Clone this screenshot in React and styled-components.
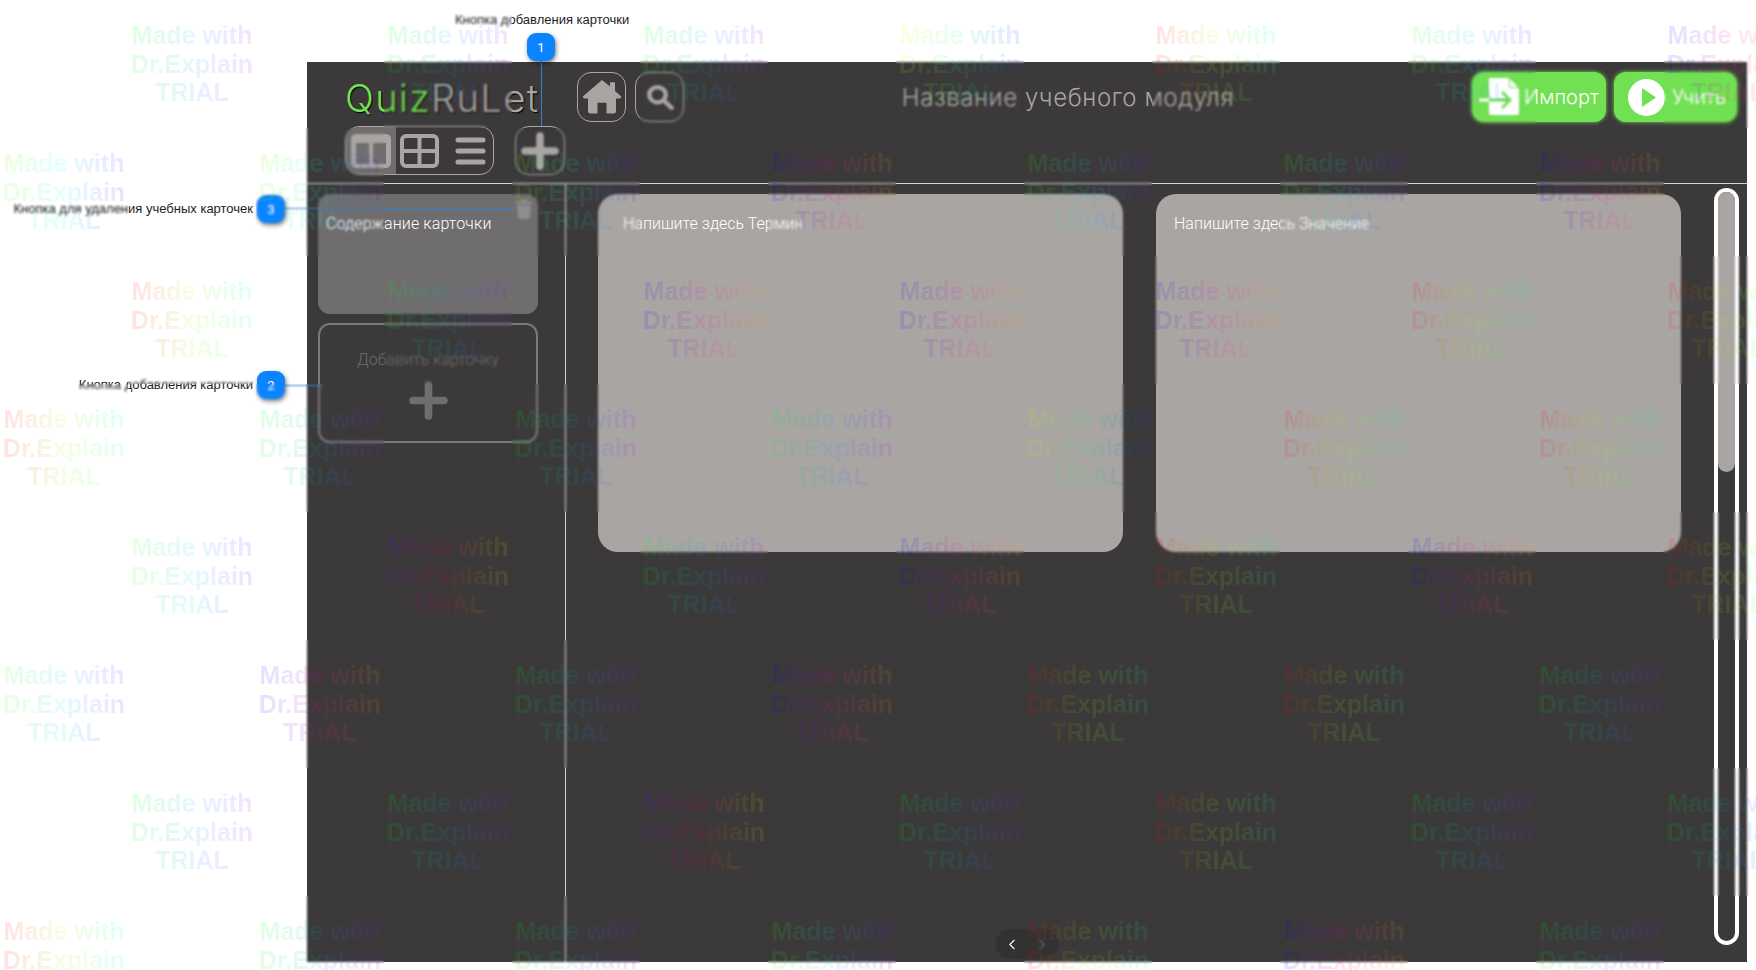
import React from "react";
import styled, { createGlobalStyle } from "styled-components";
import { ChevronLeft, ChevronRight } from "lucide-react";

const GlobalStyle = createGlobalStyle`
  html, body {
    margin: 0;
    height: 970px;
    overflow: hidden;
    background: #fff;
    font-family: Roboto, "Liberation Sans", sans-serif;
  }
`;

const GREY = "#a9a5a3";
const DIM = "#6f6d6d";
const GREEN = "#72e053";
const BLUE = "#0a84ff";

const Page = styled.div`
  position: relative;
  width: 1756px;
  height: 970px;
  padding: 62px 0 0 307px;
  box-sizing: border-box;
  overflow: hidden;
`;

const Panel = styled.div`
  position: relative;
  width: 1440px;
  height: 900px;
  background: #3b3939;
  display: flex;
  flex-direction: column;
`;

const Header = styled.header`
  height: 122px;
  box-sizing: border-box;
  padding: 10px 10px 0 38px;
  display: flex;
  align-items: flex-start;
  border-bottom: 1px solid #d5d3d2;
`;

const HeaderLeft = styled.div`
  width: 339px;
  display: flex;
  flex-direction: column;
  gap: 4px;
`;

const Row = styled.div`
  display: flex;
  align-items: center;
`;

const Logo = styled.div`
  width: 232px;
  height: 50px;
  font-family: Inter, sans-serif;
  font-size: 38px;
  font-weight: 300;
  letter-spacing: 1.4px;
  line-height: 52px;
  color: ${GREY};
  box-sizing: border-box;
  text-shadow: 1px 1px 1px #000;
  white-space: nowrap;

  span {
    color: ${GREEN};
  }
`;

const IconButton = styled.button`
  width: ${(p) => p.$w || 49}px;
  height: ${(p) => p.$h || 50}px;
  margin-left: ${(p) => p.$ml || 0}px;
  padding: 0;
  display: flex;
  align-items: center;
  justify-content: center;
  background: transparent;
  border: 1px solid ${GREY};
  border-radius: 14px;
  color: ${GREY};
`;

const Tabs = styled.div`
  width: 149px;
  height: 49px;
  box-sizing: border-box;
  display: flex;
  border: 1px solid ${GREY};
  border-radius: 14px;
  overflow: hidden;
`;

const Tab = styled.div`
  flex: 0 0 ${(p) => p.$w}px;
  box-sizing: border-box;
  padding-left: ${(p) => p.$pl || 0}px;
  display: flex;
  align-items: center;
  justify-content: center;
  background: ${(p) => (p.$active ? DIM : "transparent")};
`;

const Title = styled.h1`
  flex: 1;
  margin: 0;
  height: 52px;
  line-height: 52px;
  padding-right: 20px;
  text-align: center;
  font-family: Inter, sans-serif;
  font-size: 24px;
  font-weight: 300;
  letter-spacing: 0.6px;
  color: ${GREY};
`;

const Actions = styled.div`
  display: flex;
  gap: 8px;
`;

const GreenButton = styled.button`
  width: ${(p) => p.$w}px;
  height: 50px;
  padding: 0 0 0 ${(p) => p.$pl}px;
  display: flex;
  align-items: center;
  gap: ${(p) => p.$gap}px;
  background: ${GREEN};
  border: 0;
  border-radius: 12px;
  box-shadow: 0 0 4px ${GREEN};
  color: #fff;
  font-family: Inter, sans-serif;
  font-weight: 300;
  font-size: 20px;
`;

const Body = styled.div`
  flex: 1;
  display: flex;
  min-height: 0;
`;

const Sidebar = styled.aside`
  width: 259px;
  box-sizing: border-box;
  padding: 10px 0 0 11px;
  border-right: 1px solid #d5d3d2;
  display: flex;
  flex-direction: column;
  gap: 9px;
`;

const MiniCard = styled.div`
  position: relative;
  width: 220px;
  height: 120px;
  box-sizing: border-box;
  padding: 20px 8px;
  background: ${DIM};
  border-radius: 12px;
  color: #fff;
  font-size: 16px;
  font-weight: 300;
  letter-spacing: 0.12px;
  line-height: 20px;
`;

const TrashIcon = styled.svg`
  position: absolute;
  top: 6px;
  right: 6px;
`;

const AddCard = styled.div`
  width: 220px;
  height: 120px;
  box-sizing: border-box;
  padding-top: 25px;
  border: 2px solid #7b7979;
  border-radius: 12px;
  display: flex;
  flex-direction: column;
  align-items: center;
  gap: 11px;
  color: ${DIM};
  font-size: 16px;
  font-weight: 300;
  line-height: 20px;
`;

const Content = styled.main`
  flex: 1;
  display: flex;
  align-items: flex-start;
  padding: 4px 8px 0 32px;
`;

const BigCard = styled.div`
  width: ${(p) => p.$w}px;
  height: 358px;
  margin: 6px 33px 0 0;
  box-sizing: border-box;
  padding: 20px ${(p) => p.$pl}px;
  background: ${GREY};
  border-radius: 20px;
  color: #fff;
  font-size: 16px;
  font-weight: 300;
  line-height: 20px;
`;

const ScrollTrack = styled.div`
  width: 25px;
  height: 757px;
  box-sizing: border-box;
  border: 4px solid #fff;
  border-radius: 13px;
`;

const ScrollThumb = styled.div`
  height: 280px;
  background: ${GREY};
  border-radius: 9px;
`;

const Pager = styled.div`
  position: absolute;
  left: 50%;
  bottom: 3px;
  transform: translateX(-50%);
  width: 63px;
  height: 30px;
  display: flex;
  align-items: center;
  justify-content: space-around;
  padding: 0 2px;
  box-sizing: border-box;
  background: #333232;
  border-radius: 15px;
  color: #fff;
`;

const Badge = styled.div`
  position: absolute;
  left: ${(p) => p.$x}px;
  top: ${(p) => p.$y}px;
  width: 28px;
  height: 28px;
  display: flex;
  align-items: center;
  justify-content: center;
  background: ${BLUE};
  border-radius: 9px;
  box-shadow: 1px 2px 4px rgba(0, 0, 0, 0.55);
  color: #fff;
  font-size: 13px;
`;

const Label = styled.div`
  position: absolute;
  top: ${(p) => p.$y}px;
  white-space: nowrap;
  color: #1e1e1e;
  font-family: "Liberation Sans", sans-serif;
  font-size: 13px;
  line-height: 16px;
  ${(p) => (p.$right != null ? `right: ${1756 - p.$right}px;` : `left: ${p.$left}px;`)}
`;

const Wire = styled.div`
  position: absolute;
  left: ${(p) => p.$x}px;
  top: ${(p) => p.$y}px;
  width: ${(p) => p.$w}px;
  height: ${(p) => p.$h}px;
  background: #2f83d6;
`;

const Watermark = styled.div`
  position: absolute;
  inset: 0;
  pointer-events: none;
`;

const WatermarkRow = styled.div`
  display: flex;
  gap: 128px;
  height: 128px;
  padding-left: ${(p) => (p.$odd ? 0 : 128)}px;
`;

const WatermarkTile = styled.div`
  flex: 0 0 128px;
  height: 128px;
  box-sizing: border-box;
  display: flex;
  flex-direction: column;
  align-items: center;
  justify-content: center;
  backdrop-filter: blur(1px);
  font-family: "Liberation Sans", sans-serif;
  font-weight: 700;
  font-size: 25px;
  line-height: 28.5px;
  white-space: nowrap;
  color: transparent;
  background-image: linear-gradient(
    90deg,
    hsla(${(p) => p.$hue}, 100%, 50%, 0.11) 5%,
    hsla(${(p) => p.$hue + 80}, 100%, 50%, 0.11) 50%,
    hsla(${(p) => p.$hue + 160}, 100%, 50%, 0.11) 95%
  );
  -webkit-background-clip: text;
  background-clip: text;
`;

// стартовый оттенок каждой плашки водяного знака, ряд за рядом
const WATERMARK_HUES = [
  [120, 120, 120, 70, 0, 110, 240],
  [100, 100, 100, 240, 110, 110, 240],
  [0, 120, 240, 240, 240, 0, 0],
  [0, 120, 120, 120, 70, 0, 0],
  [110, 270, 120, 240, 0, 240, 0],
  [110, 240, 120, 240, 0, 0, 120],
  [120, 120, 270, 120, 0, 120, 120],
  [0, 120, 120, 110, 0, 240, 120],
];

const HomeIcon = () => (
  <svg width="38" height="34" viewBox="0 0 38 36" preserveAspectRatio="none" fill={GREY}>
    <path d="M19 0 27 7V2.500h5v9.200l6 5.500q.8 1.800-1 2.300h-4V33q0 2.500-2.500 2.500H23.500V24h-9v11.500H7.500Q5 35.500 5 33V19.500H1q-1.800-.5-1-2.300Z" />
  </svg>
);

const SearchIcon = () => (
  <svg width="28" height="26" viewBox="0 0 34 34" preserveAspectRatio="none" fill="none" stroke={GREY} strokeWidth="5.500" strokeLinecap="round">
    <circle cx="14" cy="14" r="10" />
    <path d="M22 22 31 31" />
  </svg>
);

const ColumnsIcon = () => (
  <svg width="40" height="34" viewBox="0 0 40 34">
    <rect width="40" height="34" rx="5" fill={GREY} />
    <rect x="5" y="9" width="13" height="21" rx="1" fill={DIM} />
    <rect x="22" y="9" width="13" height="21" rx="1" fill={DIM} />
  </svg>
);

const GridIcon = () => (
  <svg width="39" height="34" viewBox="0 0 39 34" fill="none" stroke={GREY} strokeWidth="4">
    <rect x="2" y="2" width="35" height="30" rx="4" />
    <path d="M19.500 2V32M2 17H37" />
  </svg>
);

const MenuIcon = () => (
  <svg width="31" height="28" viewBox="0 0 31 28" fill="none" stroke={GREY} strokeWidth="5" strokeLinecap="round">
    <path d="M3 3H28M3 14H28M3 25H28" />
  </svg>
);

const PlusIcon = ({ size, color }) => (
  <svg width={size} height={size} viewBox="0 0 38 38" fill="none" stroke={color} strokeWidth="7.500" strokeLinecap="round">
    <path d="M19 4V34M4 19H34" />
  </svg>
);

const ImportIcon = () => (
  <svg width="42" height="38" viewBox="0 0 42 38">
    <path d="M10 0H29L40 11V35Q40 37 38 37H12Q10 37 10 35Z" fill="#fff" />
    <path d="M30 0 40 10H30Z" fill={GREEN} />
    <path d="M31 1 39 9H31Z" fill="#fff" />
    <path d="M10 22H30M23 14 31 22 23 30" fill="none" stroke={GREEN} strokeWidth="3" />
    <path d="M0 22H10" stroke="#fff" strokeWidth="3" />
  </svg>
);

const PlayIcon = () => (
  <svg width="37" height="37" viewBox="0 0 37 37">
    <circle cx="18.500" cy="18.500" r="18.500" fill="#fff" />
    <path d="M14 9 28 18.500 14 28Z" fill={GREEN} />
  </svg>
);

const App = () => {
  return (
    <Page>
      <GlobalStyle />
      <Panel>
        <Header>
          <HeaderLeft>
            <Row>
              <Logo>
                <span>Quiz</span>RuLet
              </Logo>
              <IconButton>
                <HomeIcon />
              </IconButton>
              <IconButton $ml={9}>
                <SearchIcon />
              </IconButton>
            </Row>
            <Row>
              <Tabs>
                <Tab $w={50} $active>
                  <ColumnsIcon />
                </Tab>
                <Tab $w={47}>
                  <GridIcon />
                </Tab>
                <Tab $w={50} $pl={4}>
                  <MenuIcon />
                </Tab>
              </Tabs>
              <IconButton $w={50} $h={49} $ml={21}>
                <PlusIcon size={38} color={GREY} />
              </IconButton>
            </Row>
          </HeaderLeft>
          <Title>Название учебного модуля</Title>
          <Actions>
            <GreenButton $w={134} $pl={7} $gap={3}>
              <ImportIcon />
              Импорт
            </GreenButton>
            <GreenButton $w={123} $pl={14} $gap={7}>
              <PlayIcon />
              Учить
            </GreenButton>
          </Actions>
        </Header>
        <Body>
          <Sidebar>
            <MiniCard>
              Содержание карточки
              <TrashIcon width="16" height="19" viewBox="0 0 16 19" fill="#8f8c8b">
                <path d="M5.500 0H10.500L11 1.500H16V4H0V1.500H5ZM1 5H15L14 17.500Q13.900 19 12.500 19H3.500Q2.100 19 2 17.500Z" />
              </TrashIcon>
            </MiniCard>
            <AddCard>
              Добавить карточку
              <PlusIcon size={39} color={DIM} />
            </AddCard>
          </Sidebar>
          <Content>
            <BigCard $w={525} $pl={25}>Напишите здесь Термин</BigCard>
            <BigCard $w={525} $pl={18}>Напишите здесь Значение</BigCard>
            <ScrollTrack>
              <ScrollThumb />
            </ScrollTrack>
          </Content>
        </Body>
        <Pager>
          <ChevronLeft size={17} strokeWidth={1.5} />
          <ChevronRight size={17} strokeWidth={1.5} color="#6f6d6d" />
        </Pager>
      </Panel>

      <Label $left={455} $y={12}>Кнопка добавления карточки</Label>
      <Wire $x={541} $y={60} $w={1} $h={66} />
      <Badge $x={527} $y={33}>1</Badge>

      <Label $right={253} $y={201}>Кнопка для удаления учебных карточек</Label>
      <Wire $x={285} $y={208} $w={230} $h={1} />
      <Badge $x={257} $y={195}>3</Badge>

      <Label $right={253} $y={377}>Кнопка добавления карточки</Label>
      <Wire $x={285} $y={385} $w={38} $h={1} />
      <Badge $x={257} $y={371}>2</Badge>

      <Watermark>
        {WATERMARK_HUES.map((hues, r) => (
          <WatermarkRow key={r} $odd={r % 2 === 1}>
            {hues.map((hue, c) => (
              <WatermarkTile key={c} $hue={hue}>
                <div>Made with</div>
                <div>Dr.Explain</div>
                <div>TRIAL</div>
              </WatermarkTile>
            ))}
          </WatermarkRow>
        ))}
      </Watermark>
    </Page>
  );
};

export default App;
